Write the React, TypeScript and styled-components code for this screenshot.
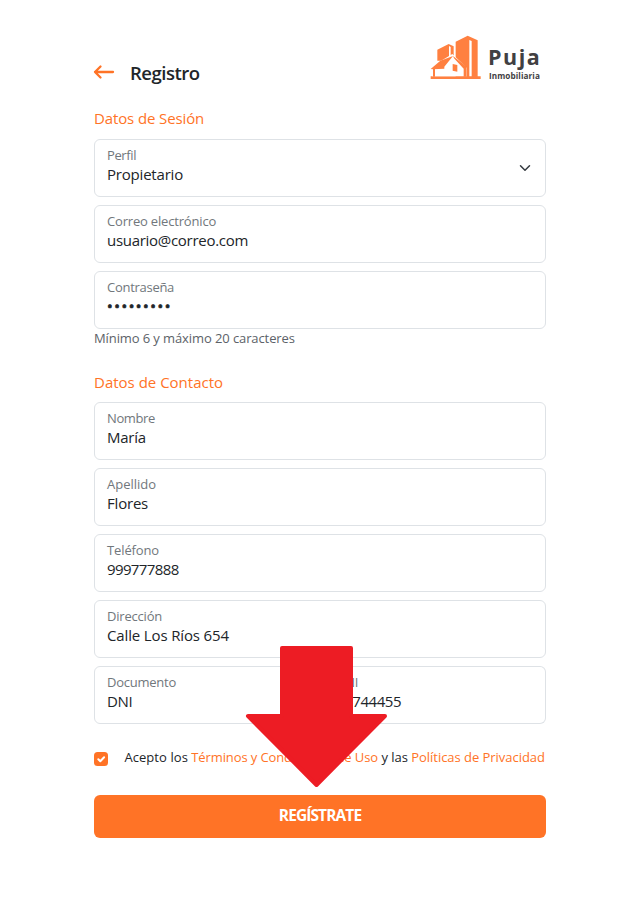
import React from "react";
import styled, { createGlobalStyle } from "styled-components";

const ORANGE = "#ff7326";

const GlobalStyle = createGlobalStyle`
  * { box-sizing: border-box; }
  body {
    margin: 0;
    background: #fff;
    color: #212529;
    font-family: "Open Sans", "Noto Sans", sans-serif;
    overflow: hidden;
  }
`;

const Page = styled.main`
  position: relative;
  width: 452px;
  height: 903px;
  margin-left: 94px;
  padding-top: 32px;
  display: flex;
  flex-direction: column;
`;

const Header = styled.header`
  display: flex;
  justify-content: space-between;
  height: 76px;
  margin-right: 4px;
`;

const TitleGroup = styled.div`
  display: flex;
  align-items: center;
  gap: 15px;
  height: 24px;
  margin-top: 29px;
`;

const BackIcon = styled.svg`
  display: block;
  width: 22px;
  height: 16px;
  margin: -2px 0 0 -1px;
`;

const Title = styled.h1`
  margin: 0;
  font-size: 18.5px;
  line-height: 24px;
  font-weight: 600;
  letter-spacing: -0.5px;
`;

const Brand = styled.div`
  display: flex;
  gap: 5px;
`;

const BrandMark = styled.svg`
  display: block;
  width: 54px;
  height: 48px;
  margin-top: 2px;
`;

const BrandText = styled.div`
  display: flex;
  flex-direction: column;
  width: 54px;
  padding-top: 13px;
  color: #414042;
  white-space: nowrap;
`;

const BrandName = styled.span`
  font-size: 21.5px;
  line-height: 24px;
  font-weight: 700;
  letter-spacing: 1.5px;
`;

const BrandTag = styled.span`
  padding-left: 1px;
  font-size: 8.2px;
  line-height: 14px;
  font-weight: 700;
  letter-spacing: 0.08px;
`;

const SectionTitle = styled.h2<{ $track: number }>`
  margin: 0;
  color: ${ORANGE};
  font-size: 15px;
  line-height: 20px;
  font-weight: 400;
  letter-spacing: ${p => p.$track}px;
`;

const FieldStack = styled.div<{ $top: number }>`
  display: flex;
  flex-direction: column;
  gap: 8px;
  margin-top: ${p => p.$top}px;
`;

const FieldBox = styled.div<{ $join?: "start" | "end" }>`
  display: flex;
  align-items: center;
  justify-content: space-between;
  height: 58px;
  padding: 0 14px 0 12px;
  border: 1px solid #dee2e6;
  border-left-width: ${p => (p.$join === "end" ? 0 : 1)}px;
  border-radius: ${p => (p.$join === "start" ? "6px 0 0 6px" : p.$join === "end" ? "0 6px 6px 0" : "6px")};
`;

const FieldText = styled.div`
  display: flex;
  flex-direction: column;
  height: 44px;
  white-space: nowrap;
`;

const Label = styled.span<{ $track: number }>`
  color: #71777c;
  font-size: 13px;
  line-height: 18px;
  letter-spacing: ${p => p.$track}px;
`;

const Value = styled.span<{ $track: number; $stroke?: number }>`
  font-size: 15px;
  line-height: 20px;
  letter-spacing: ${p => p.$track}px;
  -webkit-text-stroke: ${p => p.$stroke ?? 0}px currentColor;
`;

const Chevron = styled.svg`
  display: block;
  width: 12px;
  height: 12px;
`;

const SplitRow = styled.div`
  display: grid;
  grid-template-columns: 230px 222px;
`;

const Hint = styled.p`
  margin: 0 0 25px;
  color: #5c6268;
  font-size: 13px;
  line-height: 18px;
  letter-spacing: -0.1px;
`;

const Terms = styled.label`
  display: flex;
  align-items: center;
  height: 18px;
  margin-top: 24px;
  font-size: 13px;
  line-height: 18px;
  white-space: nowrap;
`;

const Checkbox = styled.span`
  display: flex;
  width: 14px;
  height: 14px;
  margin: 4px 16.4px 0 0;
  border-radius: 3.5px;
  background: ${ORANGE};
`;

const TermsText = styled.span<{ $track: number; $link?: boolean }>`
  margin-right: 3.4px;
  color: ${p => (p.$link ? ORANGE : "inherit")};
  letter-spacing: ${p => p.$track}px;
`;

const Submit = styled.button`
  flex: none;
  height: 43px;
  margin-top: 29px;
  padding: 0 0 4px;
  border: 0;
  border-radius: 6px;
  background: ${ORANGE};
  color: #fff;
  font: 700 15.5px/20px "Open Sans", sans-serif;
  letter-spacing: -0.9px;
`;

const Pointer = styled.svg`
  position: absolute;
  left: 151px;
  top: 645px;
  width: 143px;
  height: 143px;
`;

type FieldProps = {
  label: string;
  value: string;
  labelTrack: number;
  valueTrack: number;
  valueStroke?: number;
  join?: "start" | "end";
  select?: boolean;
};

function Field({ label, value, labelTrack, valueTrack, valueStroke, join, select }: FieldProps) {
  return (
    <FieldBox $join={join}>
      <FieldText>
        <Label $track={labelTrack}>{label}</Label>
        <Value $track={valueTrack} $stroke={valueStroke}>{value}</Value>
      </FieldText>
      {select && (
        <Chevron viewBox="0 0 16 16" fill="none" stroke="#343a40" strokeWidth="2" strokeLinecap="round" strokeLinejoin="round">
          <path d="m2 5 6 6 6-6" />
        </Chevron>
      )}
    </FieldBox>
  );
}

const account: FieldProps[] = [
  { label: "Perfil", value: "Propietario", labelTrack: -0.38, valueTrack: -0.2, select: true },
  { label: "Correo electrónico", value: "usuario@correo.com", labelTrack: -0.18, valueTrack: -0.29 },
  { label: "Contraseña", value: "•••••••••", labelTrack: -0.28, valueTrack: 1.57, valueStroke: 0.7 },
];

const contact: FieldProps[] = [
  { label: "Nombre", value: "María", labelTrack: -0.38, valueTrack: -0.25 },
  { label: "Apellido", value: "Flores", labelTrack: 0, valueTrack: -0.2 },
  { label: "Teléfono", value: "999777888", labelTrack: -0.12, valueTrack: -0.62 },
  { label: "Dirección", value: "Calle Los Ríos 654", labelTrack: -0.2, valueTrack: -0.14 },
];

export default function App() {
  return (
    <>
      <GlobalStyle />
      <Page>
        <Header>
          <TitleGroup>
            <BackIcon viewBox="0 0 22 16" fill="none" stroke={ORANGE} strokeWidth="2.3" strokeLinecap="round" strokeLinejoin="round">
              <path d="M20 8H2M7.5 2.5 2 8l5.5 5.5" />
            </BackIcon>
            <Title>Registro</Title>
          </TitleGroup>
          <Brand>
            <BrandMark viewBox="0 0 162 144" fill="#ff8040">
              <path d="M5 127H155V135H5Z" />
              <path d="M25 47 59 30 74 37V80H65V39L60 36V80H25Z" />
              <path d="M80 23 116 5 146 19V130H128V21L121 18V130H80Z" />
              <path fill="#fff" d="M4 100 70 60 114 102V127H10V108Z" />
              <path d="M5 105 34 80 72 66 46 98 46 104 12 106Z" />
              <path d="M12 100H18V128H12ZM72 66 75 73 104 104V128H113V98Z" />
              <path d="M71 90 85 93V113L71 110Z" />
            </BrandMark>
            <BrandText>
              <BrandName>Puja</BrandName>
              <BrandTag>Inmobiliaria</BrandTag>
            </BrandText>
          </Brand>
        </Header>

        <SectionTitle $track={-0.12}>Datos de Sesión</SectionTitle>
        <FieldStack $top={11}>
          {account.map(f => <Field key={f.label} {...f} />)}
        </FieldStack>
        <Hint>Mínimo 6 y máximo 20 caracteres</Hint>

        <SectionTitle $track={0}>Datos de Contacto</SectionTitle>
        <FieldStack $top={10}>
          {contact.map(f => <Field key={f.label} {...f} />)}
          <SplitRow>
            <Field label="Documento" value="DNI" labelTrack={-0.25} valueTrack={-0.3} join="start" />
            <Field label="DNI" value="44744455" labelTrack={-0.2} valueTrack={-0.44} join="end" />
          </SplitRow>
        </FieldStack>

        <Terms>
          <Checkbox>
            <svg viewBox="0 0 14 14" width="14" height="14" fill="none" stroke="#fff" strokeWidth="2" strokeLinecap="round" strokeLinejoin="round">
              <path d="m4.3 7.3 2 2 3.8-4" />
            </svg>
          </Checkbox>
          <TermsText $track={0.07}>Acepto los</TermsText>
          <TermsText $track={-0.11} $link>Términos y Condiciones de Uso</TermsText>
          <TermsText $track={-0.02}>y las</TermsText>
          <TermsText $track={-0.04} $link>Políticas de Privacidad</TermsText>
        </Terms>

        <Submit type="button">REGÍSTRATE</Submit>

        <Pointer viewBox="245 645 143 143" fill="#ed1c24" stroke="#ed1c24" strokeWidth="4" strokeLinejoin="round">
          <path d="M282 648H351V716H385L316.5 785 248 716H282Z" />
        </Pointer>
      </Page>
    </>
  );
}
